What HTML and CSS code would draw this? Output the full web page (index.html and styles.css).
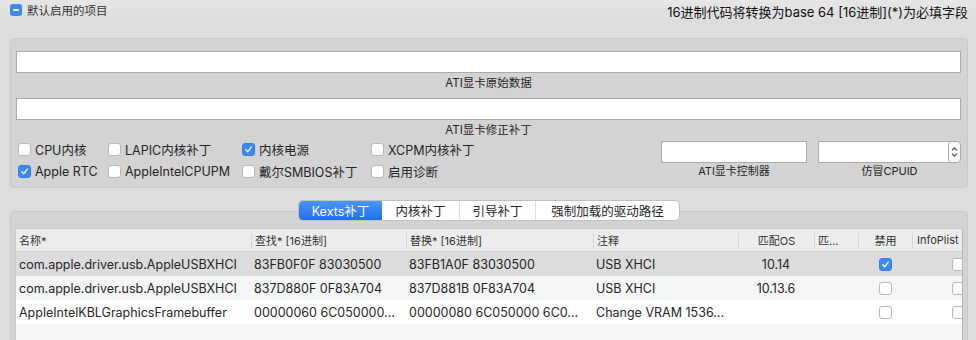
FILE: index.html
```html
<!DOCTYPE html>
<html lang="zh">
<head>
<meta charset="utf-8">
<link rel="stylesheet" href="styles.css">
</head>
<body>
<div class="topbar">
  <div class="topleft"><span class="mixed"></span><span>默认启用的项目</span></div>
  <div class="topright">16进制代码将转换为base 64 [16进制](*)为必填字段</div>
</div>

<div class="box box1">
  <div class="field"><div class="input wide"></div><div class="flabel cond">ATI显卡原始数据</div></div>
  <div class="field"><div class="input wide"></div><div class="flabel cond">ATI显卡修正补丁</div></div>
  <div class="lower">
    <div class="checks">
      <label class="chk"><span class="cb"></span>CPU内核</label>
      <label class="chk"><span class="cb"></span>LAPIC内核补丁</label>
      <label class="chk"><span class="cb on"><svg viewBox="0 0 13 13"><path d="M3.3 6.8 L5.5 9.2 L9.8 3.6" fill="none" stroke="#fff" stroke-width="1.5" stroke-linecap="round" stroke-linejoin="round"/></svg></span>内核电源</label>
      <label class="chk"><span class="cb"></span>XCPM内核补丁</label>
      <label class="chk"><span class="cb on"><svg viewBox="0 0 13 13"><path d="M3.3 6.8 L5.5 9.2 L9.8 3.6" fill="none" stroke="#fff" stroke-width="1.5" stroke-linecap="round" stroke-linejoin="round"/></svg></span>Apple RTC</label>
      <label class="chk"><span class="cb"></span>AppleIntelCPUPM</label>
      <label class="chk"><span class="cb"></span>戴尔SMBIOS补丁</label>
      <label class="chk"><span class="cb"></span>启用诊断</label>
    </div>
    <div class="sidefields">
      <div class="sfield f1"><div class="input"></div><div class="slabel">ATI显卡控制器</div></div>
      <div class="sfield f2"><div class="input combo"><span class="stepper"><svg viewBox="0 0 12 20"><path d="M3.5 8 L6 5.5 L8.5 8 M3.5 12 L6 14.5 L8.5 12" fill="none" stroke="#444" stroke-width="1.1" stroke-linecap="round" stroke-linejoin="round"/></svg></span></div><div class="slabel">仿冒CPUID</div></div>
    </div>
  </div>
</div>

<div class="tabwrap">
  <div class="tabs">
    <span class="tab active">Kexts补丁</span>
    <span class="tab t2">内核补丁</span>
    <span class="tab t3">引导补丁</span>
    <span class="tab t4">强制加载的驱动路径</span>
  </div>
</div>

<div class="box box2">
  <div class="table">
    <div class="row head">
      <div class="c c1">名称*</div>
      <div class="c c2">查找* [16进制]</div>
      <div class="c c3">替换* [16进制]</div>
      <div class="c c4">注释</div>
      <div class="c c5 ctr">匹配OS</div>
      <div class="c c6">匹...</div>
      <div class="c c7 ctr">禁用</div>
      <div class="c c8">InfoPlist</div>
    </div>
    <div class="row sel">
      <div class="c c1">com.apple.driver.usb.AppleUSBXHCI</div>
      <div class="c c2">83FB0F0F 83030500</div>
      <div class="c c3">83FB1A0F 83030500</div>
      <div class="c c4">USB XHCI</div>
      <div class="c c5 ctr">10.14</div>
      <div class="c c6"></div>
      <div class="c c7 ctr"><span class="cb on"><svg viewBox="0 0 13 13"><path d="M3.3 6.8 L5.5 9.2 L9.8 3.6" fill="none" stroke="#fff" stroke-width="1.5" stroke-linecap="round" stroke-linejoin="round"/></svg></span></div>
      <div class="c c8 ctr"><span class="cb"></span></div>
    </div>
    <div class="row alt">
      <div class="c c1">com.apple.driver.usb.AppleUSBXHCI</div>
      <div class="c c2">837D880F 0F83A704</div>
      <div class="c c3">837D881B 0F83A704</div>
      <div class="c c4">USB XHCI</div>
      <div class="c c5 ctr">10.13.6</div>
      <div class="c c6"></div>
      <div class="c c7 ctr"><span class="cb"></span></div>
      <div class="c c8 ctr"><span class="cb"></span></div>
    </div>
    <div class="row">
      <div class="c c1">AppleIntelKBLGraphicsFramebuffer</div>
      <div class="c c2">00000060 6C050000...</div>
      <div class="c c3">00000080 6C050000 6C0...</div>
      <div class="c c4">Change VRAM 1536...</div>
      <div class="c c5 ctr"></div>
      <div class="c c6"></div>
      <div class="c c7 ctr"><span class="cb"></span></div>
      <div class="c c8 ctr"><span class="cb"></span></div>
    </div>
    <div class="row alt"></div>
  </div>
</div>
</body>
</html>
```

FILE: styles.css
```css
* { box-sizing: border-box; }
html, body { margin: 0; padding: 0; }
body {
  width: 976px;
  height: 340px;
  overflow: hidden;
  background: #dddddd;
  font-family: "Inter", "Noto Sans CJK SC", sans-serif;
  color: #262626;
}
.topbar {
  height: 22px;
  padding: 0 8px 0 10px;
  display: flex;
  align-items: center;
  justify-content: space-between;
  background: linear-gradient(#e6e6e6, #dddddd);
}
.topleft {
  display: flex;
  align-items: center;
  gap: 5px;
  font-size: 11.5px;
  color: #333;
  margin-top: -2px;
}
.mixed {
  width: 12px;
  height: 12px;
  border-radius: 3px;
  background: #3a87f6;
  position: relative;
  display: inline-block;
}
.mixed::after {
  content: "";
  position: absolute;
  left: 3px;
  top: 5px;
  width: 6px;
  height: 2px;
  background: #fff;
  border-radius: 1px;
}
.topright {
  font-size: 13px;
  color: #111;
}
.box {
  margin: 0 8px 0 10px;
  background: #d3d3d3;
  border: 1px solid #c9c9c9;
  border-radius: 4px;
}
.box1 {
  margin-top: 16px;
  padding: 12px 6px 5px 5px;
}
.input {
  height: 22px;
  background: #fff;
  border: 1px solid #aaaaaa;
}
.flabel {
  text-align: center;
  font-size: 11.5px;
  line-height: 16px;
  margin: 2px 0 7px;
  color: #262626;
}
.lower {
  display: flex;
  justify-content: space-between;
  margin-top: -7px;
}
.checks {
  display: grid;
  grid-template-columns: 90px 134px 129px 130px;
  grid-auto-rows: 22px;
  padding-left: 2px;
}
.chk {
  display: flex;
  align-items: center;
  gap: 4px;
  font-size: 12.5px;
  color: #262626;
  white-space: nowrap;
}
.cb {
  width: 13px;
  height: 13px;
  border-radius: 3px;
  border: 1px solid #b8b8b8;
  background: #fff;
  display: inline-block;
  flex: none;
}
.cb.on {
  background: #3b88f7;
  border-color: #3480ee;
}
.cb svg { display: block; width: 11px; height: 11px; }
.sidefields {
  display: flex;
  gap: 11px;
  padding-top: 3px;
}
.sfield { display: flex; flex-direction: column; }
.f1 { width: 146px; }
.f2 { width: 143px; }
.slabel {
  text-align: center;
  font-size: 11px;
  line-height: 16px;
  margin-top: 0px;
  color: #262626;
}
.combo {
  position: relative;
  border-radius: 0 4px 4px 0;
}
.stepper {
  position: absolute;
  right: -1px;
  top: -1px;
  width: 13px;
  height: 22px;
  border: 1px solid #a9a9a9;
  border-radius: 4px;
  background: #fafafa;
}
.stepper svg { display: block; width: 11px; height: 20px; }
.tabwrap {
  display: flex;
  justify-content: center;
  margin: 12px 8px -10px 10px;
  position: relative;
  z-index: 2;
}
.tabs {
  display: flex;
  height: 21px;
  background: #fff;
  border: 1px solid #c0c0c0;
  border-radius: 5px;
  overflow: hidden;
  font-size: 12.5px;
}
.tab {
  display: flex;
  align-items: center;
  justify-content: center;
  color: #262626;
  border-left: 1px solid #dcdcdc;
}
.tab.active {
  width: 83px;
  border-left: none;
  color: #fff;
  background: linear-gradient(#4a96fb, #1f6fec);
}
.t2 { width: 77px; border-left: none; }
.t3 { width: 76px; }
.t4 { width: 144px; }
.box2 {
  height: 129px;
  padding: 16px 4px 0 4px;
  border-bottom: none;
  border-radius: 4px 4px 0 0;
  overflow: hidden;
}
.table {
  background: #fff;
  border-left: 1px solid #c8c8c8;
  border-top: 1px solid #c8c8c8;
  border-right: 1px solid #b8b8b8;
  overflow: hidden;
  height: 112px;
}
.row {
  display: flex;
  height: 24px;
  align-items: center;
  font-size: 12.5px;
  color: #262626;
  white-space: nowrap;
}
.row.head {
  height: 23px;
  background: #ececec;
  border-bottom: 1px solid #d0d0d0;
  font-size: 11px;
  color: #333;
}
.row.sel { background: #dcdcdc; }
.row.alt { background: #f4f5f5; }
.c {
  flex: none;
  padding-left: 3px;
  overflow: hidden;
  height: 100%;
  display: flex;
  align-items: center;
}
.head .c { border-left: 1px solid #d4d4d4; height: 15px; }
.head .c1 { border-left: none; }
.c.ctr { justify-content: center; padding-left: 0; }
.c1 { width: 235px; }
.c2 { width: 155px; }
.c3 { width: 187px; }
.c4 { width: 145px; }
.c5 { width: 76px; }
.c6 { width: 44px; }
.c7 { width: 54px; }
.c8 { width: 92px; }
.head .c8 { padding-left: 4px; }
```
